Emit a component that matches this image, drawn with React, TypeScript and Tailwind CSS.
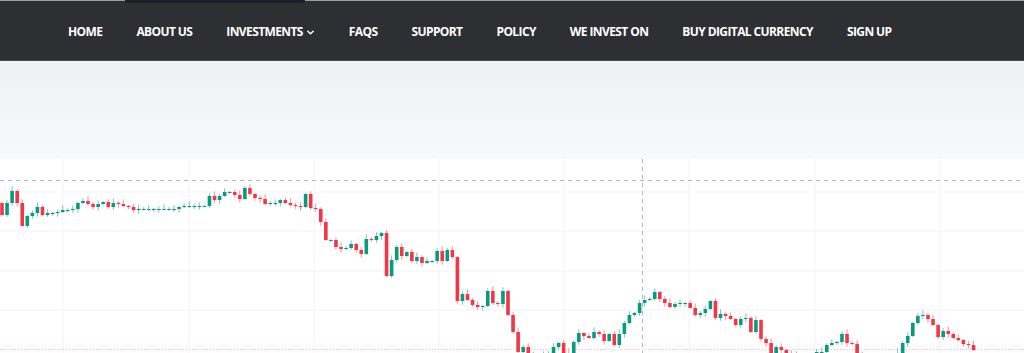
import React from 'react';

const NAV = ['HOME', 'ABOUT US', 'INVESTMENTS', 'FAQS', 'SUPPORT', 'POLICY', 'WE INVEST ON', 'BUY DIGITAL CURRENCY', 'SIGN UP'];

// close prices in screen y (open = previous close)
const CLOSES = [
  215, 203, 191, 203, 226, 216, 213, 207, 215, 213, 213, 212, 210, 210, 209, 203, 201, 204, 207, 204,
  202, 207, 203, 204, 206, 207, 210, 209, 209, 209, 209, 209, 209, 209, 209, 207, 206, 206, 206, 206,
  206, 196, 200, 196, 192, 192, 195, 199, 188, 194, 198, 199, 204, 203, 203, 200, 203, 205, 206, 207,
  194, 208, 209, 222, 240, 240, 247, 249, 248, 244, 250, 254, 239, 240, 236, 233, 276, 260, 247, 256,
  252, 261, 257, 263, 261, 261, 251, 261, 250, 257, 301, 294, 300, 305, 307, 306, 291, 303, 304, 291,
  315, 332, 352, 347, 353, 358, 360, 356, 353, 347, 343, 353, 355, 342, 333, 336, 338, 332, 334, 341,
  334, 345, 334, 323, 315, 313, 303, 300, 299, 292, 299, 303, 307, 304, 303, 303, 308, 315, 313, 309,
  301, 318, 314, 316, 319, 325, 319, 318, 332, 320, 339, 343, 353, 347, 350, 353, 356, 360, 362, 360,
  356, 352, 352, 345, 343, 342, 334, 343, 344, 353, 356, 360, 362, 364, 362, 360, 356, 353, 343, 336,
  323, 316, 315, 319, 325, 337, 331, 334, 338, 340, 344, 345, 350,
];

const GREEN = '#089981';
const RED = '#f23645';

function Chart() {
  const step = 5.06;
  let open = 203;
  const candles = CLOSES.map((c, i) => {
    const o = open;
    open = c;
    const x = 2 + i * step;
    const up = c <= o;
    const top = Math.min(o, c);
    const bot = Math.max(o, c);
    const hi = top - (((i * 37) % 5) * 0.9 + 1);
    const lo = bot + (((i * 53) % 4) * 0.9 + 1);
    const color = up ? GREEN : RED;
    return (
      <g key={i}>
        <line x1={x} x2={x} y1={hi} y2={lo} stroke={color} strokeOpacity={0.55} strokeWidth={1} />
        <rect x={x - 1.8} y={top} width={3.6} height={Math.max(bot - top, 1)} fill={color} />
      </g>
    );
  });

  const vx = [63, 189, 314, 439, 564, 689, 815, 940];
  const hy = [192, 231, 271, 310];

  return (
    <svg width="1024" height="194" viewBox="0 159 1024 194" className="block">
      <rect x="0" y="159" width="1024" height="194" fill="#ffffff" />
      {vx.map((x) => (
        <line key={x} x1={x} x2={x} y1={159} y2={353} stroke="#f0f3fa" strokeWidth={1} />
      ))}
      {hy.map((y) => (
        <line key={y} x1={0} x2={1024} y1={y} y2={y} stroke="#f0f3fa" strokeWidth={1} />
      ))}
      <line x1={0} x2={1024} y1={180.5} y2={180.5} stroke="#b2b5be" strokeWidth={1} strokeDasharray="4 4" />
      <line x1={642.5} x2={642.5} y1={159} y2={353} stroke="#b2b5be" strokeWidth={1} strokeDasharray="4 4" />
      {candles}
      <line x1={0} x2={1024} y1={349.5} y2={349.5} stroke={RED} strokeOpacity={0.35} strokeWidth={1} strokeDasharray="1 2" />
    </svg>
  );
}

export default function App() {
  return (
    <div className="w-[1024px] h-[353px] overflow-hidden bg-[#f6f7fb]" style={{ fontFamily: '"Open Sans", sans-serif' }}>
      <header className="h-[61px] bg-[#2e2f33] border-t border-[#9c9c9c] border-b border-b-[#4a4a4e] flex flex-col">
        <div className="flex h-[3px] -mt-px">
          <div className="w-[125px]" />
          <div className="w-[180px] h-[3px] bg-[#1d1c2a] rounded-b-md" />
        </div>
        <nav className="flex items-center gap-[34px] pl-[68px] pt-[2px] h-[55px]">
          {NAV.map((item) => (
            <div key={item} className="flex items-center gap-[3px] text-white font-bold text-[12px] tracking-[-0.6px] whitespace-nowrap">
              <span>{item}</span>
              {item === 'INVESTMENTS' && (
                <svg width="9" height="9" viewBox="0 0 10 10" className="mt-[2px]">
                  <path d="M2 3.5 L5 6.5 L8 3.5" fill="none" stroke="#ffffff" strokeWidth="1.6" strokeLinecap="round" strokeLinejoin="round" />
                </svg>
              )}
            </div>
          ))}
        </nav>
      </header>
      <div className="h-[98px] bg-gradient-to-b from-[#eff0f4] to-[#f8f9fc]" />
      <Chart />
    </div>
  );
}
